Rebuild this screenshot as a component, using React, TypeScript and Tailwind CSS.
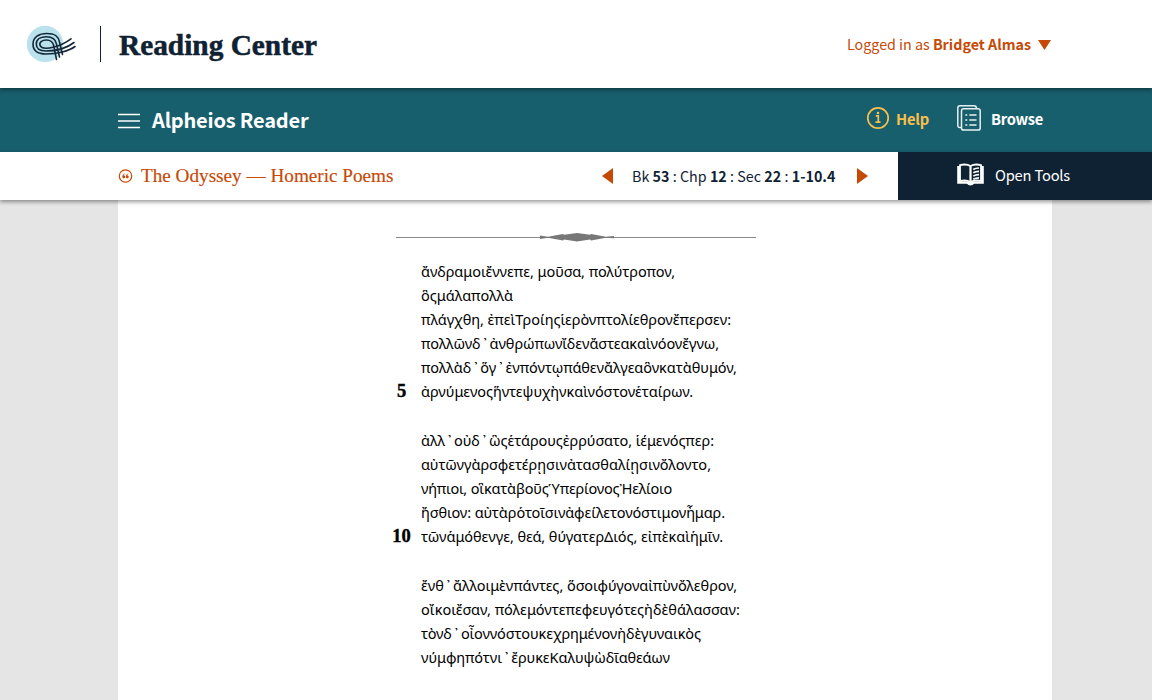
import { useLayoutEffect, useRef, useState } from "react";

function Fit({ w, className = "", mode = "spacing", children }: { w: number; className?: string; mode?: "spacing" | "scale"; children: React.ReactNode }) {
  const ref = useRef<HTMLSpanElement>(null);
  const [style, setStyle] = useState<React.CSSProperties>({});
  useLayoutEffect(() => {
    const el = ref.current;
    if (!el) return;
    const natural = el.getBoundingClientRect().width;
    const n = (el.textContent ?? "").length;
    setStyle(mode === "scale" ? { transform: `scaleX(${w / natural})` } : { letterSpacing: `${(w - natural) / n}px` });
  }, []);
  return (
    <span className="block" style={{ width: w }}>
      <span ref={ref} style={style} className={`inline-block origin-left whitespace-pre ${className}`}>{children}</span>
    </span>
  );
}

const stanzas: { text: string; w: number; n?: number }[][] = [
  [
    { text: "ἄνδραμοιἔννεπε, μοῦσα, πολύτροπον,", w: 254 },
    { text: "ὃςμάλαπολλὰ", w: 92 },
    { text: "πλάγχθη, ἐπεὶΤροίηςἱερὸνπτολίεθρονἔπερσεν:", w: 310 },
    { text: "πολλῶνδ᾽ἀνθρώπωνἴδενἄστεακαὶνόονἔγνω,", w: 298 },
    { text: "πολλὰδ᾽ὅγ᾽ἐνπόντῳπάθενἄλγεαὃνκατὰθυμόν,", w: 316 },
    { text: "ἀρνύμενοςἥντεψυχὴνκαὶνόστονἑταίρων.", w: 272, n: 5 },
  ],
  [
    { text: "ἀλλ᾽οὐδ᾽ὣςἑτάρουςἐρρύσατο, ἱέμενόςπερ:", w: 293 },
    { text: "αὐτῶνγὰρσφετέρῃσινἀτασθαλίῃσινὄλοντο,", w: 290 },
    { text: "νήπιοι, οἳκατὰβοῦςὙπερίονοςἨελίοιο", w: 251 },
    { text: "ἤσθιον: αὐτὰρὁτοῖσινἀφείλετονόστιμονἦμαρ.", w: 304 },
    { text: "τῶνἁμόθενγε, θεά, θύγατερΔιός, εἰπὲκαὶἡμῖν.", w: 302, n: 10 },
  ],
  [
    { text: "ἔνθ᾽ἄλλοιμὲνπάντες, ὅσοιφύγοναἰπὺνὄλεθρον,", w: 316 },
    { text: "οἴκοιἔσαν, πόλεμόντεπεφευγότεςἠδὲθάλασσαν:", w: 319 },
    { text: "τὸνδ᾽οἶοννόστουκεχρημένονἠδὲγυναικὸς", w: 280 },
    { text: "νύμφηπότνι᾽ἔρυκεΚαλυψὼδῖαθεάων", w: 249 },
  ],
];

// The elision mark gets a little air on both sides.
function Verse({ text }: { text: string }) {
  return (
    <>
      {text.split("᾽").map((part, i) => (
        <span key={i}>
          {i > 0 && <span className="pr-[2.500px] pl-[3px]">᾽</span>}
          {part}
        </span>
      ))}
    </>
  );
}

function Logo() {
  return (
    <svg className="h-[38px] w-[52px] shrink-0" viewBox="26 25 52 38" fill="none">
      <circle cx="45" cy="44" r="18.200" fill="#b9e2ec" />
      <g stroke="#15283a" strokeWidth="1.600" strokeLinecap="round">
        <path d="M75 46.500C69 51 57 54 46 54C37 54 33 50 33 44C33 37 39 33.500 47 33.500C55 33.500 58.500 36 59.500 42L62.500 54.500" />
        <path d="M74 42.500C67 48 57 51 46 51C39.500 51 36.300 48.500 36.300 44C36.300 39 41 36.800 46.500 36.800C52.500 36.800 55.500 39 56.500 44L59.500 57" />
        <path d="M71 38.800C66 42.500 60 45.500 54 47C48 48.500 42 48.500 40.300 46C38.500 42.500 42 40 46.500 40C50.500 40 53 42 53.800 46L56.500 59.500" />
      </g>
    </svg>
  );
}

export default function App() {
  return (
    <div className="flex h-[700px] w-[1152px] flex-col overflow-hidden bg-[#e5e5e5] font-['Noto_Sans_CJK_SC',sans-serif] text-[#0f2233]">
      <header className="z-20 flex h-[88px] shrink-0 items-center bg-white pl-[26px] shadow-[0_2px_4px_rgba(0,0,0,0.4)]">
        <Logo />
        <div className="ml-[22px] h-9 w-px bg-[#0f2233]" />
        <h1 className="mt-[2px] ml-[17.500px] font-['Liberation_Serif',serif] text-[29px] leading-[36px] font-bold [-webkit-text-stroke:0.5px_#0f2233]"><Fit w={198} mode="scale">Reading Center</Fit></h1>
        <div className="ml-[530.500px] flex items-center text-[14.300px] leading-6 text-[#c64906]">
          <Fit w={184}>Logged in as <b>Bridget Almas</b></Fit>
          <svg className="mt-[2px] ml-[7px] h-[10px] w-[13px]" viewBox="0 0 13 10"><path d="M0 0H13L6.500 10Z" fill="#c64906" /></svg>
        </div>
      </header>
      <nav className="flex h-16 shrink-0 items-center bg-[#185f6d] pl-[118px] text-white">
        <svg className="mt-[2px] h-[16px] w-[22px]" viewBox="0 0 22 16"><path d="M0 1.500H22M0 8H22M0 14.500H22" stroke="#fff" strokeWidth="1.300" /></svg>
        <div className="ml-3 text-[20px] leading-7 font-bold"><Fit w={156.5}>Alpheios Reader</Fit></div>
        <svg className="-mt-1 ml-[557.500px] h-6 w-6" viewBox="0 0 24 24" fill="none" stroke="#fbbf4c">
          <circle cx="12" cy="12" r="10.200" strokeWidth="1.700" />
          <path d="M9.800 9.800H12.300V16M9.500 16.200H14.500" strokeWidth="1.700" />
          <circle cx="12" cy="7" r="1.300" fill="#fbbf4c" stroke="none" />
        </svg>
        <div className="-mt-[3px] ml-[6px] text-[14.700px] leading-6 font-bold text-[#fbbf4c]"><Fit w={33}>Help</Fit></div>
        <svg className="-mt-1 ml-[28px] h-[26px] w-[24px]" viewBox="0 0 24 26" fill="none" stroke="#e7eff0" strokeWidth="1.500">
          <path d="M4.500 22.500H3Q.8 22.500 .8 20.300V3Q.8 .8 3 .8H17Q19.500 .8 19.500 3.500" />
          <rect x="4.500" y="3.700" width="18.700" height="21.400" rx="2.200" />
          <path d="M8.300 10H10.300M12.300 10H19.500M8.300 15H10.300M12.300 15H19.500M8.300 20H10.300M12.300 20H19.500" />
        </svg>
        <div className="-mt-[3px] ml-[10px] text-[14.700px] leading-6 font-bold"><Fit w={52}>Browse</Fit></div>
      </nav>
      <div className="z-10 flex h-12 shrink-0 items-center bg-white pl-[118px] shadow-[0_2px_4px_rgba(0,0,0,0.4)]">
        <svg className="h-[14px] w-[15px]" viewBox="-0.500 0 15 14" fill="none">
          <circle cx="7" cy="7" r="6.200" stroke="#c64906" strokeWidth="1.200" />
          <path d="M6.500 4.500C5 4.800 3.800 6 3.800 7.700C3.800 9.700 6.700 9.800 6.700 7.900C6.700 7 6 6.600 5.200 6.600C5.200 5.800 5.800 5.200 6.500 5ZM10 4.500C8.500 4.800 7.300 6 7.300 7.700C7.300 9.700 10.200 9.800 10.200 7.900C10.200 7 9.500 6.600 8.700 6.600C8.700 5.800 9.300 5.200 10 5Z" fill="#c64906" />
        </svg>
        <div className="ml-[8px] font-['Liberation_Serif',serif] text-[19px] leading-6 text-[#c64906] [-webkit-text-stroke:0.150px_#c64906]"><Fit w={252.5} mode="scale">The Odyssey — Homeric Poems</Fit></div>
        <svg className="ml-[208.500px] h-4 w-[11px]" viewBox="0 0 11 16"><path d="M11 0V16L0 8Z" fill="#c64906" /></svg>
        <div className="ml-[19px] text-[14.300px] leading-6"><Fit w={203.5}>Bk <b>53</b> : Chp <b>12</b> : Sec <b>22</b> : <b>1-10.4</b></Fit></div>
        <svg className="ml-[21.500px] h-4 w-[11px]" viewBox="0 0 11 16"><path d="M0 0V16L11 8Z" fill="#c64906" /></svg>
        <div className="ml-auto flex h-12 w-[254px] items-center bg-[#0f2233] pl-[59px] text-white">
          <svg className="-mt-[3px] h-[23px] w-[27px]" viewBox="0 0 27 23" fill="none">
            <path d="M3 2.200Q9 .5 13.500 3Q18 .5 24 2.200V18Q18 16.500 13.500 19Q9 16.500 3 18Z" stroke="#fff" strokeWidth="1.800" />
            <path d="M1.500 3V19.500H10.500Q13.500 22.500 16.500 19.500H25.500V3" stroke="#fff" strokeWidth="2.600" />
            <path d="M13.500 3V20" stroke="#fff" strokeWidth="2.200" />
            <path d="M16.300 6.500Q18.500 5 22 5M16.300 9.800Q18.500 8.300 22 8.300M16.300 13.100Q18.500 11.600 22 11.600M16.300 16.200Q18.500 14.800 22 14.800" stroke="#fff" strokeWidth="1.700" />
          </svg>
          <div className="-mt-[2px] ml-[11px] text-[14.700px] leading-6"><Fit w={75}>Open Tools</Fit></div>
        </div>
      </div>
      <main className="ml-[118px] w-[934px] flex-1 bg-white pt-8 text-black">
        <svg className="ml-[277px] h-[10px] w-[361px]" viewBox="0 0 361 10"><path d="M1 5.500H361" stroke="#8a8a8a" /><path d="M145 3.500L153 4.700L168 2L169 2.800L182 1L195 2.800L196 2L211 4.700L219 4V6.300L211 5.700L196 8.500L195 7.500L182 9.500L169 7.500L168 8.500L153 5.700L145 7Z" fill="#777" /></svg>
        <div className="mt-[17px] flex flex-col gap-[25px]">
          {stanzas.map((s, i) => (
            <div key={i}>
              {s.map((l) => (
                <div key={l.text} className="flex h-6 items-center">
                  <span className="ml-[268px] w-[31px] text-center font-['Liberation_Serif',serif] text-[18.500px] leading-6 font-bold [-webkit-text-stroke:0.400px_#000]">{l.n}</span>
                  <div className="ml-[4px] font-['Noto_Sans',sans-serif] text-[14.500px] leading-6"><Fit w={l.w}><Verse text={l.text} /></Fit></div>
                </div>
              ))}
            </div>
          ))}
        </div>
      </main>
    </div>
  );
}
